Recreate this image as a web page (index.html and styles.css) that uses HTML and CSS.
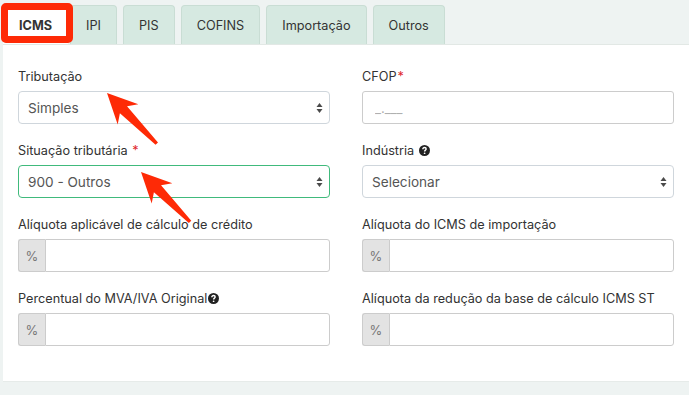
FILE: index.html
```html
<!DOCTYPE html>
<html lang="pt-BR">
<head>
    <meta charset="UTF-8">
    <meta name="viewport" content="width=device-width, initial-scale=1.0">
    <title>Tributação do produto</title>
    <link rel="stylesheet" href="styles.css">
</head>
<body>
    <div class="page">
        <ul class="tabs">
            <li class="tab active">ICMS</li>
            <li class="tab">IPI</li>
            <li class="tab">PIS</li>
            <li class="tab">COFINS</li>
            <li class="tab">Importação</li>
            <li class="tab">Outros</li>
        </ul>

        <div class="panel">
            <form class="grid">
                <div class="field">
                    <label>Tributação</label>
                    <div class="select">
                        <span>Simples</span>
                        <svg class="caret" width="7" height="12" viewBox="0 0 7 12"><path d="M3.5 1 L6.5 5 L0.5 5 Z M3.5 11 L6.5 7 L0.5 7 Z"/></svg>
                    </div>
                </div>
                <div class="field">
                    <label>CFOP<span class="req">*</span></label>
                    <input type="text" class="input mask" placeholder="_.___">
                </div>

                <div class="field">
                    <label>Situação tributária&nbsp;<span class="req">*</span></label>
                    <div class="select focus">
                        <span>900 - Outros</span>
                        <svg class="caret" width="7" height="12" viewBox="0 0 7 12"><path d="M3.5 1 L6.5 5 L0.5 5 Z M3.5 11 L6.5 7 L0.5 7 Z"/></svg>
                    </div>
                </div>
                <div class="field">
                    <label>Indústria&nbsp;<svg class="help" width="11" height="11" viewBox="0 0 12 12"><circle cx="6" cy="6" r="6"/><path d="M4.2 4.6 C4.2 3.4 5 2.8 6 2.8 C7.1 2.8 7.8 3.5 7.8 4.3 C7.8 5.5 6.1 5.6 6.1 7" fill="none" stroke="#fff" stroke-width="1.6"/><circle cx="6.1" cy="9" r="0.95" fill="#fff"/></svg></label>
                    <div class="select">
                        <span>Selecionar</span>
                        <svg class="caret" width="7" height="12" viewBox="0 0 7 12"><path d="M3.5 1 L6.5 5 L0.5 5 Z M3.5 11 L6.5 7 L0.5 7 Z"/></svg>
                    </div>
                </div>

                <div class="field">
                    <label>Alíquota aplicável de cálculo de crédito</label>
                    <div class="input-group">
                        <span class="addon">%</span>
                        <input type="text" class="input">
                    </div>
                </div>
                <div class="field">
                    <label>Alíquota do ICMS de importação</label>
                    <div class="input-group">
                        <span class="addon">%</span>
                        <input type="text" class="input">
                    </div>
                </div>

                <div class="field">
                    <label>Percentual do MVA/IVA Original<svg class="help" width="11" height="11" viewBox="0 0 12 12"><circle cx="6" cy="6" r="6"/><path d="M4.2 4.6 C4.2 3.4 5 2.8 6 2.8 C7.1 2.8 7.8 3.5 7.8 4.3 C7.8 5.5 6.1 5.6 6.1 7" fill="none" stroke="#fff" stroke-width="1.6"/><circle cx="6.1" cy="9" r="0.95" fill="#fff"/></svg></label>
                    <div class="input-group">
                        <span class="addon">%</span>
                        <input type="text" class="input">
                    </div>
                </div>
                <div class="field">
                    <label>Alíquota da redução da base de cálculo ICMS ST</label>
                    <div class="input-group">
                        <span class="addon">%</span>
                        <input type="text" class="input">
                    </div>
                </div>
            </form>
        </div>

        <!-- annotations drawn over the screenshot -->
        <div class="mark-box"></div>
        <svg class="marks" width="689" height="395" viewBox="0 0 689 395">
            <polygon transform="translate(107 93) rotate(45.5)" points="0,0 30,-14.5 23.5,-5 71,-1.7 71,1.7 23.5,5 30,14.5"/>
            <polygon transform="translate(141 172) rotate(45.5)" points="0,0 30,-14.5 23.5,-5 70,-1.7 70,1.7 23.5,5 30,14.5"/>
        </svg>
    </div>
</body>
</html>
```

FILE: styles.css
```css
/* General Styles */
body {
    margin: 0;
    background-color: #eef3f2;
    font-family: Inter, "Liberation Sans", sans-serif;
    color: #333;
}
.page {
    position: relative;
    width: 689px;
    height: 395px;
    overflow: hidden;
}

/* Tabs */
.tabs {
    display: flex;
    list-style: none;
    margin: 0;
    padding: 5px 0 0 3px;
}
.tab {
    display: flex;
    align-items: center;
    height: 38px;
    padding: 0 15px;
    margin-right: 6px;
    font-size: 12.7px;
    background-color: #d6e9e1;
    border: 1px solid #c9ddd4;
    border-bottom: none;
    border-radius: 4px 4px 0 0;
}
.tab.active {
    background-color: #fff;
    border-color: #fff;
    font-weight: bold;
    margin-right: 2px;
}

/* Panel */
.panel {
    margin-left: 3px;
    padding: 22px 15px 35px;
    background: white;
    border-top: 1px solid #e2e8e5;
    border-bottom: 1px solid #e6ebe9;
}
.grid {
    display: grid;
    grid-template-columns: 1fr 1fr;
    column-gap: 32px;
    row-gap: 17px;
    margin: 0;
}
.field label {
    display: flex;
    align-items: center;
    height: 18px;
    margin-bottom: 6px;
    font-size: 12.7px;
    color: #333;
}
.req {
    color: #e0262b;
    margin-left: 1px;
}
.help {
    fill: #222;
    margin-left: 1px;
}

/* Controls */
.select, .input, .input-group {
    box-sizing: border-box;
    height: 33px;
}
.select {
    display: flex;
    align-items: center;
    justify-content: space-between;
    padding: 0 6px 0 9px;
    border: 1px solid #cfd6dc;
    border-radius: 4px;
    font-size: 13.6px;
    color: #555;
}
.select.focus {
    border-color: #40ba7c;
}
.caret {
    fill: #4a4a4a;
}
.input {
    width: 100%;
    margin: 0;
    padding: 0 12px;
    border: 1px solid #ccc;
    border-radius: 3px;
    font-family: inherit;
    font-size: 14px;
    color: #555;
    background: white;
}
.input.mask::placeholder {
    color: #b0b0b0;
    font-size: 13px;
}
.input-group {
    display: flex;
}
.input-group .input {
    height: 33px;
    border-radius: 0 3px 3px 0;
}
.addon {
    display: flex;
    align-items: center;
    justify-content: center;
    flex: 0 0 27px;
    box-sizing: border-box;
    border: 1px solid #ccc;
    border-right: none;
    border-radius: 3px 0 0 3px;
    background-color: #e3e3e3;
    font-size: 13px;
    color: #777;
}

/* Annotations */
.mark-box {
    position: absolute;
    left: 1px;
    top: 3px;
    width: 72px;
    height: 40px;
    box-sizing: border-box;
    border: 7px solid #fe2a06;
    border-radius: 5px;
}
.marks {
    position: absolute;
    left: 0;
    top: 0;
    fill: #fe2a06;
    pointer-events: none;
}
```
